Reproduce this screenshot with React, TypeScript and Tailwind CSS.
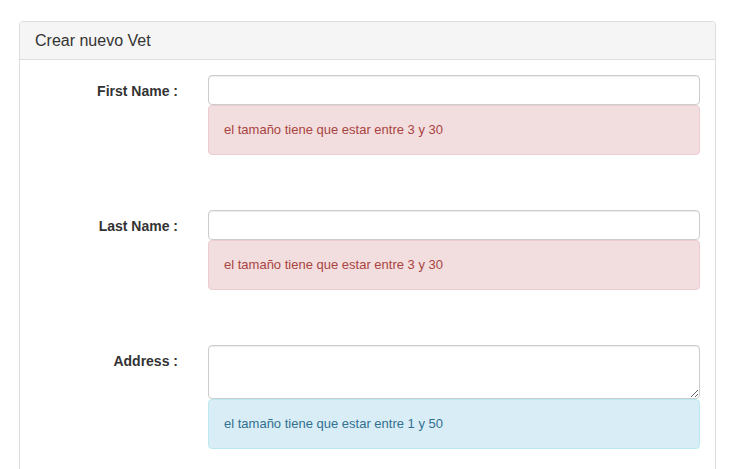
export default function App() {
  const fields = [
    { label: "First Name :", kind: "input", msg: "el tamaño tiene que estar entre 3 y 30", tone: "danger" },
    { label: "Last Name :", kind: "input", msg: "el tamaño tiene que estar entre 3 y 30", tone: "danger" },
    { label: "Address :", kind: "textarea", msg: "el tamaño tiene que estar entre 1 y 50", tone: "info" },
  ];

  return (
    <div
      className="min-h-[469px] bg-white pt-[21px] pl-[19px] pr-[35px] text-[#333]"
      style={{ fontFamily: '"Liberation Sans", Arial, sans-serif' }}
    >
      <div className="w-[697px] rounded-[4px] border border-[#ddd] bg-white">
        <div className="h-[38px] rounded-t-[3px] border-b border-[#ddd] bg-[#f5f5f5] px-[15px] pt-[9px] text-[16px] leading-[20px]">
          Crear nuevo Vet
        </div>
        <div className="flex flex-col gap-[55px] px-[15px] pt-[15px] pb-[40px]">
          {fields.map((f) => (
            <div key={f.label} className="flex">
              <label className="w-[143px] pt-[6px] text-right text-[14px] font-bold leading-[20px]">
                {f.label}
              </label>
              <div className="ml-[30px] flex-1">
                {f.kind === "input" ? (
                  <input
                    type="text"
                    className="block h-[30px] w-full rounded-[4px] border border-[#ccc] bg-white px-3 text-[14px] shadow-[inset_0_1px_1px_rgba(0,0,0,0.075)] outline-none"
                  />
                ) : (
                  <textarea className="block h-[54px] w-full rounded-[4px] border border-[#ccc] bg-white px-3 text-[14px] shadow-[inset_0_1px_1px_rgba(0,0,0,0.075)] outline-none" />
                )}
                <div
                  className={
                    f.tone === "danger"
                      ? "h-[50px] rounded-[4px] border border-[#ebccd1] bg-[#f2dede] px-[15px] pt-[15px] text-[13px] leading-[18px] text-[#a94442]"
                      : "h-[50px] rounded-[4px] border border-[#bce8f1] bg-[#d9edf7] px-[15px] pt-[15px] text-[13px] leading-[18px] text-[#31708f]"
                  }
                >
                  {f.msg}
                </div>
              </div>
            </div>
          ))}
        </div>
      </div>
    </div>
  );
}
